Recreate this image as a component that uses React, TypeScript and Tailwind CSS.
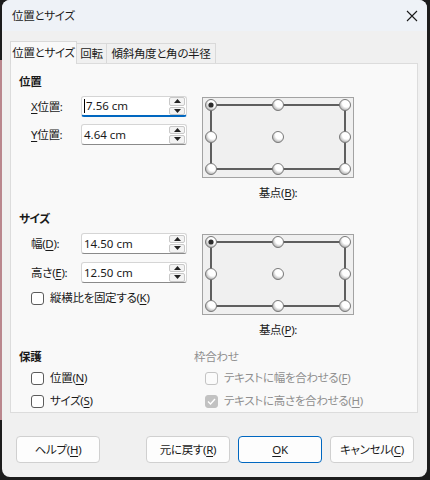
import React from 'react'

const font = "font-['Noto_Sans','Noto_Sans_CJK_JP',sans-serif] [font-feature-settings:'palt'] tracking-[-0.3px]"

function U({ children }: { children: React.ReactNode }) {
  return <span className="underline underline-offset-2 decoration-1">{children}</span>
}

function Spin({ value, focused }: { value: string; focused?: boolean }) {
  return (
    <div
      className={
        'flex h-[21px] w-[106px] items-center bg-white border border-[#d5d5d5] rounded-[3px] ' +
        (focused ? 'border-b-[#0067c0] border-b-2' : 'border-b-[#8a8a8a]')
      }
    >
      <div className="flex flex-1 items-center pl-[2px] text-[11.5px] tracking-normal text-[#1a1a1a]">
        {focused && <span className="mr-[1px] inline-block h-[14px] w-[1px] bg-black" />}
        {value}
      </div>
      <div className="mr-[1px] flex h-[18px] w-[16px] flex-col gap-[1px]">
        {[0, 1].map((i) => (
          <div key={i} className="flex flex-1 items-center justify-center rounded-[2px] border border-[#c8c8c8] bg-[#f3f3f3]">
            <svg width="7" height="4" viewBox="0 0 7 4">
              {i === 0 ? <path d="M0 4 L3.5 0 L7 4 Z" fill="#222" /> : <path d="M0 0 L3.5 4 L7 0 Z" fill="#222" />}
            </svg>
          </div>
        ))}
      </div>
    </div>
  )
}

function Radio({ x, y, on }: { x: number; y: number; on?: boolean }) {
  return (
    <g>
      <circle cx={x} cy={y} r={5.5} fill="url(#rg)" stroke="#7a7a7a" strokeWidth={1} />
      {on && <circle cx={x} cy={y} r={2.6} fill="#2b2b2b" />}
    </g>
  )
}

function BasePoint({ label }: { label: React.ReactNode }) {
  const xs = [9, 76, 143]
  const ys = [8, 40, 72]
  return (
    <div className="flex flex-col items-center">
      <svg width="152" height="81" viewBox="0 0 152 81">
        <defs>
          <radialGradient id="rg" cx="0.62" cy="0.35" r="0.75">
            <stop offset="0.45" stopColor="#ffffff" />
            <stop offset="1" stopColor="#9a9a9a" />
          </radialGradient>
        </defs>
        <rect x="0.5" y="0.5" width="151" height="80" fill="#f0f0f0" stroke="#a3a3a3" />
        <rect x="9" y="8" width="134" height="64" fill="none" stroke="#111" strokeWidth="1.3" />
        {ys.map((y, j) =>
          xs.map((x, i) => <Radio key={i + '-' + j} x={x} y={y} on={i === 0 && j === 0} />)
        )}
      </svg>
      <div className="mt-[7px] h-[16px] leading-[16px] text-[#1a1a1a]">{label}</div>
    </div>
  )
}

function Check({ label, disabled, checked }: { label: React.ReactNode; disabled?: boolean; checked?: boolean }) {
  return (
    <div className={'flex h-[16px] items-center gap-[6px] ' + (disabled ? 'text-[#8f8f8f]' : 'text-[#1a1a1a]')}>
      <div
        className={
          'flex h-[13px] w-[13px] items-center justify-center rounded-[3px] border ' +
          (checked ? 'border-[#c2c2c2] bg-[#c2c2c2]' : disabled ? 'border-[#c4c4c4] bg-[#fbfbfb]' : 'border-[#5c5c5c] bg-white')
        }
      >
        {checked && (
          <svg width="9" height="7" viewBox="0 0 9 7">
            <path d="M1 3.5 L3.5 6 L8 1" stroke="#fff" strokeWidth="1.4" fill="none" />
          </svg>
        )}
      </div>
      <span className="whitespace-nowrap">{label}</span>
    </div>
  )
}

function Button({ children, primary }: { children: React.ReactNode; primary?: boolean }) {
  return (
    <div
      className={
        'flex h-[27px] w-[84px] items-center justify-center rounded-[4px] bg-[#fdfdfd] text-[#1a1a1a] border ' +
        (primary ? 'border-[#0067c0]' : 'border-[#d0d0d0]')
      }
    >
      {children}
    </div>
  )
}

export default function App() {
  return (
    <div className={'flex h-[480px] w-[430px] bg-[#1c1c1c] text-[11.5px] ' + font}>
      <div className="flex w-[2px] flex-col">
        <div className="h-[60px]" />
        <div className="flex-1 bg-[#b9868d]" />
        <div className="h-[60px]" />
      </div>
      <div className="flex h-[477px] w-[425px] flex-col overflow-hidden rounded-[8px] bg-[#f0f0f0]">
        {/* title bar */}
        <div className="flex h-[31px] items-center justify-between bg-[#eef2f7] pl-[10px] pr-[8px]">
          <span className="text-[#1a1a1a]">位置とサイズ</span>
          <svg width="12" height="12" viewBox="0 0 12 12" className="mr-[1px]">
            <path d="M1 1 L11 11 M11 1 L1 11" stroke="#1a1a1a" strokeWidth="1.1" />
          </svg>
        </div>

        {/* tabs */}
        <div className="mt-[10px] flex h-[22px] items-end whitespace-nowrap pl-[8px] text-[#1a1a1a]">
          <div className="relative z-10 -mb-[1px] flex h-[23px] w-[67px] items-center justify-center border border-b-0 border-[#d9d9d9] bg-[#f9f9f9]">
            位置とサイズ
          </div>
          <div className="flex h-[20px] w-[30px] items-center justify-center border border-l-0 border-b-0 border-[#d9d9d9] bg-[#f0f0f0]">
            回転
          </div>
          <div className="flex h-[20px] w-[109px] items-center justify-center border border-l-0 border-b-0 border-[#d9d9d9] bg-[#f0f0f0]">
            傾斜角度と角の半径
          </div>
        </div>

        {/* panel */}
        <div className="ml-[8px] flex h-[350px] w-[408px] flex-col border border-[#dcdcdc] bg-[#f9f9f9] pl-[8px] text-[#1a1a1a]">
          <div className="mt-[10px] h-[16px] font-semibold leading-[16px]">位置</div>
          <div className="mt-[6px] flex">
            <div className="flex w-[183px] flex-col gap-[7px] pl-[12px]">
              <div className="flex items-center">
                <span className="w-[50px]">
                  <U>X</U>位置:
                </span>
                <Spin value="7.56 cm" focused />
              </div>
              <div className="flex items-center">
                <span className="w-[50px]">
                  <U>Y</U>位置:
                </span>
                <Spin value="4.64 cm" />
              </div>
            </div>
            <div className="mt-[1px]">
              <BasePoint
                label={
                  <>
                    基点(<U>B</U>):
                  </>
                }
              />
            </div>
          </div>

          <div className="mt-[10px] h-[16px] font-semibold leading-[16px]">サイズ</div>
          <div className="mt-[6px] flex">
            <div className="flex w-[183px] flex-col pl-[12px]">
              <div className="flex items-center">
                <span className="w-[50px]">
                  幅(<U>D</U>):
                </span>
                <Spin value="14.50 cm" />
              </div>
              <div className="mt-[8px] flex items-center">
                <span className="w-[50px]">
                  高さ(<U>E</U>):
                </span>
                <Spin value="12.50 cm" />
              </div>
              <div className="mt-[7px]">
                <Check
                  label={
                    <>
                      縦横比を固定する(<U>K</U>)
                    </>
                  }
                />
              </div>
            </div>
            <div className="mt-[1px]">
              <BasePoint
                label={
                  <>
                    基点(<U>P</U>):
                  </>
                }
              />
            </div>
          </div>

          <div className="mt-[11px] flex">
            <div className="flex w-[175px] flex-col">
              <div className="h-[16px] font-semibold leading-[16px]">保護</div>
              <div className="mt-[5px] flex flex-col gap-[7px] pl-[12px]">
                <Check
                  label={
                    <>
                      位置(<U>N</U>)
                    </>
                  }
                />
                <Check
                  label={
                    <>
                      サイズ(<U>S</U>)
                    </>
                  }
                />
              </div>
            </div>
            <div className="flex flex-col">
              <div className="h-[16px] leading-[16px] text-[#8f8f8f]">枠合わせ</div>
              <div className="mt-[5px] flex flex-col gap-[7px] pl-[11px]">
                <Check
                  disabled
                  label={
                    <>
                      テキストに幅を合わせる(<U>F</U>)
                    </>
                  }
                />
                <Check
                  disabled
                  checked
                  label={
                    <>
                      テキストに高さを合わせる(<U>H</U>)
                    </>
                  }
                />
              </div>
            </div>
          </div>
        </div>

        {/* buttons */}
        <div className="mt-[23px] flex pl-[14px]">
          <Button>
            ヘルプ(<U>H</U>)
          </Button>
          <div className="ml-[46px] flex gap-[8px]">
            <Button>
              元に戻す(<U>R</U>)
            </Button>
            <Button primary>
              <U>O</U>K
            </Button>
            <Button>
              キャンセル(<U>C</U>)
            </Button>
          </div>
        </div>
      </div>
    </div>
  )
}
